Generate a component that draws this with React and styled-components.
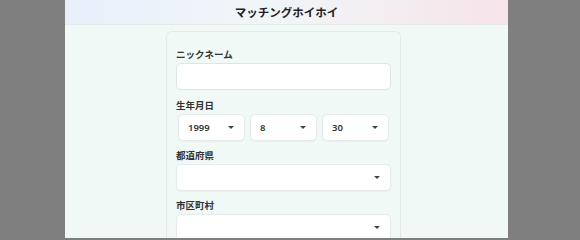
import React from "react";
import styled, { createGlobalStyle } from "styled-components";

const GlobalStyle = createGlobalStyle`
  body {
    margin: 0;
    background: #7f7f7f;
    font-family: "Noto Sans", "Noto Sans CJK JP", sans-serif;
    color: #333;
  }
`;

const Page = styled.div`
  width: 443px;
  height: 238px;
  margin-left: 65px;
  background: #f1f9f6;
  overflow: hidden;
`;

const Header = styled.header`
  height: 24px;
  display: flex;
  align-items: center;
  justify-content: center;
  background: linear-gradient(90deg, #e9effb 0%, #f0f6f8 45%, #f6e4e9 100%);
  border-bottom: 1px solid #e3ebe9;
`;

const Title = styled.h1`
  margin: 0;
  font-size: 11.5px;
  font-weight: 700;
  color: #222;
`;

const Main = styled.main`
  padding: 6px 0 0 101px;
`;

const Card = styled.div`
  width: 215px;
  padding: 16px 9px 0;
  border: 1px solid #e3ebe9;
  border-bottom: none;
  border-radius: 6px 6px 0 0;
  background: #f1f9f6;
`;

const Field = styled.div`
  margin-bottom: ${(p) => (p.$tight ? "8px" : "9px")};
`;

const Label = styled.div`
  font-size: 9.5px;
  font-weight: 700;
  line-height: 14px;
  margin-bottom: 1px;
  color: #333;
`;

const Input = styled.div`
  box-sizing: border-box;
  height: 27px;
  background: #fff;
  border: 1px solid #dde6e4;
  border-radius: 5px;
`;

const SelectRow = styled.div`
  display: flex;
  gap: 5px;
  padding: ${(p) => (p.$inset ? "0 2px" : "0")};
`;

const Select = styled.div`
  box-sizing: border-box;
  flex: ${(p) => (p.$full ? "1" : "0 0 67px")};
  height: 27px;
  display: flex;
  align-items: center;
  justify-content: space-between;
  padding: 0 10px 0 9px;
  background: #fff;
  border: 1px solid #e4ebe9;
  border-radius: 5px;
  box-shadow: 0 1px 2px rgba(0, 0, 0, 0.04);
  font-size: 9.5px;
  font-weight: 600;
  color: #333;
`;

const Arrow = styled.span`
  width: 0;
  height: 0;
  border-left: 3px solid transparent;
  border-right: 3px solid transparent;
  border-top: 3px solid #444;
`;

function DropDown({ value, full }) {
  return (
    <Select $full={full}>
      <span>{value}</span>
      <Arrow />
    </Select>
  );
}

export default function App() {
  return (
    <>
      <GlobalStyle />
      <Page>
        <Header>
          <Title>マッチングホイホイ</Title>
        </Header>
        <Main>
          <Card>
            <Field>
              <Label>ニックネーム</Label>
              <Input />
            </Field>
            <Field $tight>
              <Label>生年月日</Label>
              <SelectRow $inset>
                <DropDown value="1999" />
                <DropDown value="8" />
                <DropDown value="30" />
              </SelectRow>
            </Field>
            <Field $tight>
              <Label>都道府県</Label>
              <SelectRow>
                <DropDown value="" full />
              </SelectRow>
            </Field>
            <Field>
              <Label>市区町村</Label>
              <SelectRow>
                <DropDown value="" full />
              </SelectRow>
            </Field>
          </Card>
        </Main>
      </Page>
    </>
  );
}
